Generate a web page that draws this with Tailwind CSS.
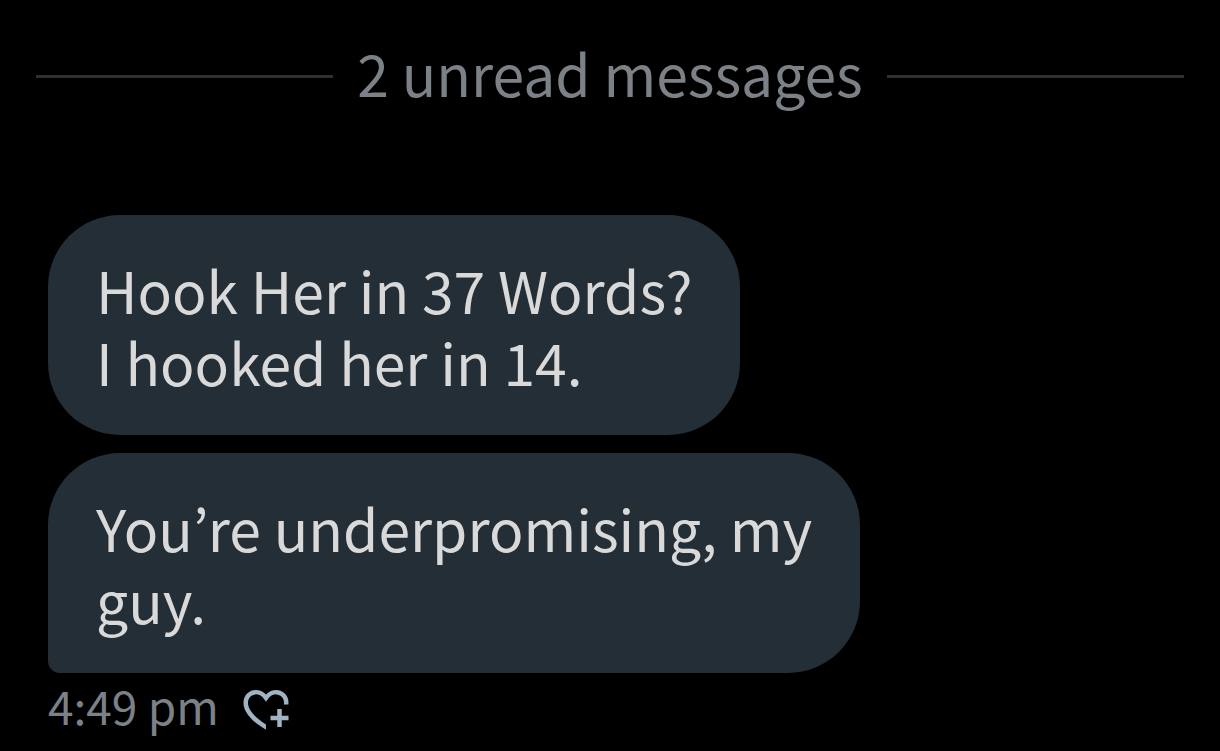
<!DOCTYPE html>
<html lang="en">
<head>
    <meta charset="UTF-8">
    <meta name="viewport" content="width=device-width, initial-scale=1.0">
    <title>Messages</title>
    <script src="https://cdn.jsdelivr.net/npm/@tailwindcss/browser@4"></script>
</head>
<body class="bg-black font-['Noto_Sans_CJK_JP',sans-serif]">
    <main class="px-9 pt-10">

        <!-- Unread divider -->
        <div class="flex items-center gap-6">
            <span class="h-[3px] flex-1 bg-[#2f3033]"></span>
            <h1 class="pb-2 text-[57px] leading-[64px] text-[#7c8188]">2 unread messages</h1>
            <span class="h-[3px] flex-1 bg-[#2f3033]"></span>
        </div>

        <!-- Messages -->
        <div class="mt-[103px] flex flex-col items-start gap-[18px] px-3 text-[57px] leading-[72px] text-[#d9d9d9]">
            <p class="rounded-[72px] bg-[#242e36] px-12 py-[38px]">Hook Her in 37 Words?<br>I hooked her in 14.</p>
            <p class="rounded-[72px] rounded-bl-xl bg-[#242e36] px-12 py-[38px]">You’re underpromising, my<br>guy.</p>
        </div>

        <!-- Time and reaction -->
        <div class="flex items-center gap-5 px-3">
            <time class="pb-2 text-[46px] leading-[64px] text-[#7c8188]">4:49 pm</time>
            <button type="button" aria-label="Add reaction" class="text-[#9fb3c2]">
                <svg class="size-[54px]" viewBox="0 0 24 24" fill="currentColor" aria-hidden="true"><path d="M17 12v3h-2.998v2h3v3h2v-3h3v-2h-3.001v-3H17zm-5 6.839c-3.871-2.34-6.053-4.639-7.127-6.609-1.112-2.04-1.031-3.7-.479-4.82.561-1.13 1.667-1.84 2.91-1.91 1.222-.06 2.68.51 3.892 2.16l.806 1.09.805-1.09c1.211-1.65 2.668-2.22 3.89-2.16 1.242.07 2.347.78 2.908 1.91.334.677.49 1.554.321 2.59h2.011c.153-1.283-.039-2.469-.539-3.48-.887-1.79-2.647-2.91-4.601-3.01-1.65-.09-3.367.56-4.796 2.01-1.43-1.45-3.147-2.1-4.798-2.01-1.954.1-3.714 1.22-4.601 3.01-.896 1.81-.846 4.17.514 6.67 1.353 2.48 4.003 5.12 8.382 7.67l.502.299v-2.32z"/></svg>
            </button>
        </div>
    </main>
</body>
</html>
